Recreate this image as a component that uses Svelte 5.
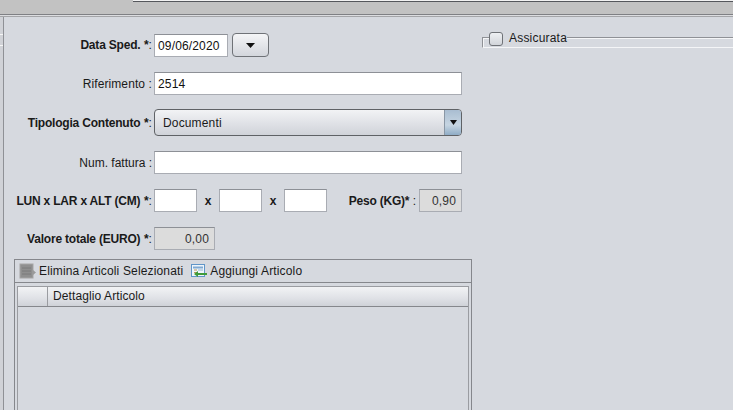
<script>
  // Form rows are static, this is just a snapshot of the shipment panel
  const dims = ["", "", ""];
</script>

<div class="top">
  <div class="tab-edge"></div>
</div>

<div class="page">
  <div class="strip">
    <div class="notch"></div>
    <div class="notch"></div>
  </div>
  <div class="form">
    <div class="row first">
      <span class="label"><b>Data Sped.</b> <b>*</b>:</span>
      <div class="input date">09/06/2020</div>
      <button class="cal" aria-label="Apri calendario">
        <svg width="9" height="5" viewBox="0 0 9 5"><path d="M0 0h9L4.5 5z" fill="#111" /></svg>
      </button>
    </div>

    <div class="row ref">
      <span class="label plain">Riferimento :</span>
      <div class="input full">2514</div>
    </div>

    <div class="row tip">
      <span class="label"><b>Tipologia Contenuto</b> <b>*</b>:</span>
      <div class="combo">
        <span class="combo-text">Documenti</span>
        <span class="combo-btn">
          <svg width="7" height="5" viewBox="0 0 7 5"><path d="M0 0h7L3.500 5z" fill="#111" /></svg>
        </span>
      </div>
    </div>

    <div class="row fatt">
      <span class="label fattura">Num. fattura :</span>
      <div class="input full"></div>
    </div>

    <div class="row dims">
      <span class="label"><b>LUN x LAR x ALT (CM)</b> <b>*</b>:</span>
      {#each dims as d, i}
        {#if i > 0}<b class="x">x</b>{/if}
        <div class="input dim">{d}</div>
      {/each}
      <span class="peso"><b>Peso (KG)*</b> :</span>
      <div class="input ro peso-val">0,90</div>
    </div>

    <div class="row tot">
      <span class="label"><b>Valore totale (EURO)</b> <b>*</b>:</span>
      <div class="input ro tot-val">0,00</div>
    </div>

    <div class="articoli">
      <div class="toolbar">
        <span class="tool">
          <svg width="17" height="16" viewBox="0 0 17 16">
            <rect x="1" y="1" width="13" height="14" fill="#8f8f8f" stroke="#a5a5a5" />
            <path d="M3 5h9M3 8h9M3 11h9" stroke="#7a7a7a" />
            <path d="M14 7l3 2.500-3 2.500z" fill="#9a9a9a" />
          </svg>
          Elimina Articoli Selezionati
        </span>
        <span class="tool">
          <svg width="17" height="16" viewBox="0 0 17 16">
            <rect x="1.500" y="1.500" width="13" height="12" fill="#eef5fb" stroke="#5f95c8" />
            <path d="M3 4.500h10" stroke="#7fa9d2" stroke-width="2" />
            <path d="M4 7h3M4 9.500h3" stroke="#c09a5a" />
            <path d="M8 7h5" stroke="#9ab6d0" />
            <path d="M17 11H7" stroke="#3f9b3a" stroke-width="2" />
            <path d="M8 8l-4 3 4 3z" fill="#3f9b3a" />
          </svg>
          Aggiungi Articolo
        </span>
      </div>
      <div class="table">
        <div class="thead">
          <div class="th corner"></div>
          <div class="th">Dettaglio Articolo</div>
        </div>
      </div>
    </div>
  </div>

  <div class="side">
    <div class="titled">
      <span class="check"></span>
      <span class="check-label">Assicurata</span>
    </div>
  </div>
</div>

<style>
  :global(body) {
    margin: 0;
    background: #d6d9df;
    overflow: hidden;
  }

  .top {
    height: 17px;
    box-sizing: border-box;
    background: #c2c2c2;
    border-bottom: 1px solid #a4a5a8;
    box-shadow: inset 0 -1px 0 #dcdde0, inset 0 -2px 0 #7f8084;
  }
  .tab-edge {
    height: 2px;
    margin-left: 133px;
    box-sizing: border-box;
    background: #f2f2f2;
    border-bottom: 1px solid #55575c;
  }

  .page {
    display: flex;
    height: 393px;
    background: #d6d9df;
    font-family: "Liberation Sans", Arial, sans-serif;
    font-size: 12px;
    color: #1a1a1a;
  }

  .strip {
    width: 3px;
    flex: none;
    background: #d0d2d7;
    border-right: 1px solid #8f9196;
  }
  .notch {
    height: 1px;
    margin-top: 17px;
    background: #f6f6f6;
  }
  .notch + .notch {
    margin-top: 10px;
  }

  .form {
    width: 478px;
    flex: none;
  }

  .row {
    display: flex;
    align-items: center;
  }
  .first { margin-top: 16px; }
  .ref { margin-top: 15px; }
  .tip { margin-top: 14px; }
  .fatt { margin-top: 15px; }
  .dims { margin-top: 15px; }
  .tot { margin-top: 15px; }

  .label {
    width: 148px;
    margin-right: 2px;
    text-align: right;
    white-space: nowrap;
    letter-spacing: 0.2px;
    flex: none;
  }
  .plain { letter-spacing: 0.1px; }
  .fattura { letter-spacing: 0; }
  .label b,
  .peso b {
    letter-spacing: -0.2px;
  }

  .input {
    height: 23px;
    box-sizing: border-box;
    background: #fff;
    border: 1px solid #a9acb3;
    border-top-color: #8d9096;
    padding: 0 3px;
    line-height: 22px;
    color: #111;
    letter-spacing: 0.15px;
    flex: none;
  }
  .date { width: 74px; }
  .full { width: 308px; }
  .dim { width: 43px; }
  .x {
    width: 22px;
    text-align: center;
  }
  .ro {
    background: #dcdcdc;
    color: #333;
    text-align: right;
    padding-right: 5px;
  }
  .peso {
    width: 89px;
    text-align: right;
    margin-right: 3px;
    white-space: nowrap;
    flex: none;
  }
  .peso-val { width: 43px; }
  .tot-val { width: 61px; }

  .cal {
    width: 37px;
    height: 24px;
    margin-left: 4px;
    padding: 0;
    display: flex;
    align-items: center;
    justify-content: center;
    background: linear-gradient(#f4f5f7, #d3d6dc);
    border: 1px solid #6f7277;
    border-radius: 4px;
  }

  .combo {
    width: 308px;
    height: 27px;
    box-sizing: border-box;
    display: flex;
    align-items: center;
    justify-content: space-between;
    background: linear-gradient(#f2f3f5, #dfe1e6 55%, #d0d3d9);
    border: 1px solid #5f6266;
    border-radius: 4px;
    overflow: hidden;
  }
  .combo-text {
    padding-left: 8px;
    letter-spacing: 0.15px;
  }
  .combo-btn {
    width: 16px;
    height: 100%;
    display: flex;
    align-items: center;
    justify-content: center;
    background: linear-gradient(#a9bdd1, #c6d5e2 60%, #8facc6);
    border-left: 1px solid #8a97a5;
  }

  .articoli {
    width: 458px;
    height: 160px;
    box-sizing: border-box;
    margin: 9px 0 0 10px;
    border: 1px solid #85878c;
  }

  .toolbar {
    height: 22px;
    display: flex;
    align-items: center;
    gap: 7px;
    padding-left: 4px;
    letter-spacing: 0.15px;
    border-bottom: 1px solid #85878c;
  }
  .tool {
    display: flex;
    align-items: center;
    gap: 3px;
    white-space: nowrap;
  }

  .table {
    margin: 3px 2px 0 2px;
    height: 140px;
    border-left: 1px solid #9a9ca1;
    border-right: 1px solid #9a9ca1;
  }
  .thead {
    display: flex;
    height: 21px;
    box-sizing: border-box;
    background: linear-gradient(#f2f3f5, #dfe1e6 60%, #cfd2d8);
    border-top: 1px solid #9a9ca1;
    border-bottom: 1px solid #85878c;
    letter-spacing: 0.1px;
  }
  .th {
    padding-left: 5px;
    line-height: 19px;
  }
  .corner {
    width: 29px;
    padding: 0;
    border-right: 1px solid #9a9ca1;
  }

  .side {
    flex: 1;
    padding-top: 20px;
  }
  .titled {
    position: relative;
    height: 9px;
    border-top: 1px solid #8f9196;
    border-left: 1px solid #8f9196;
    border-bottom: 1px solid #f4f5f7;
    box-shadow: inset 1px 1px 0 #f4f5f7;
  }
  .check {
    position: absolute;
    left: 6px;
    top: -6px;
    width: 14px;
    height: 14px;
    box-sizing: border-box;
    background: linear-gradient(#eef0f3, #d2d5da);
    border: 1px solid #6f7277;
    border-radius: 3px;
  }
  .check-label {
    position: absolute;
    left: 20px;
    top: -7px;
    padding: 0 0 0 6px;
    background: #d6d9df;
    line-height: 14px;
    letter-spacing: 0.2px;
  }
</style>
